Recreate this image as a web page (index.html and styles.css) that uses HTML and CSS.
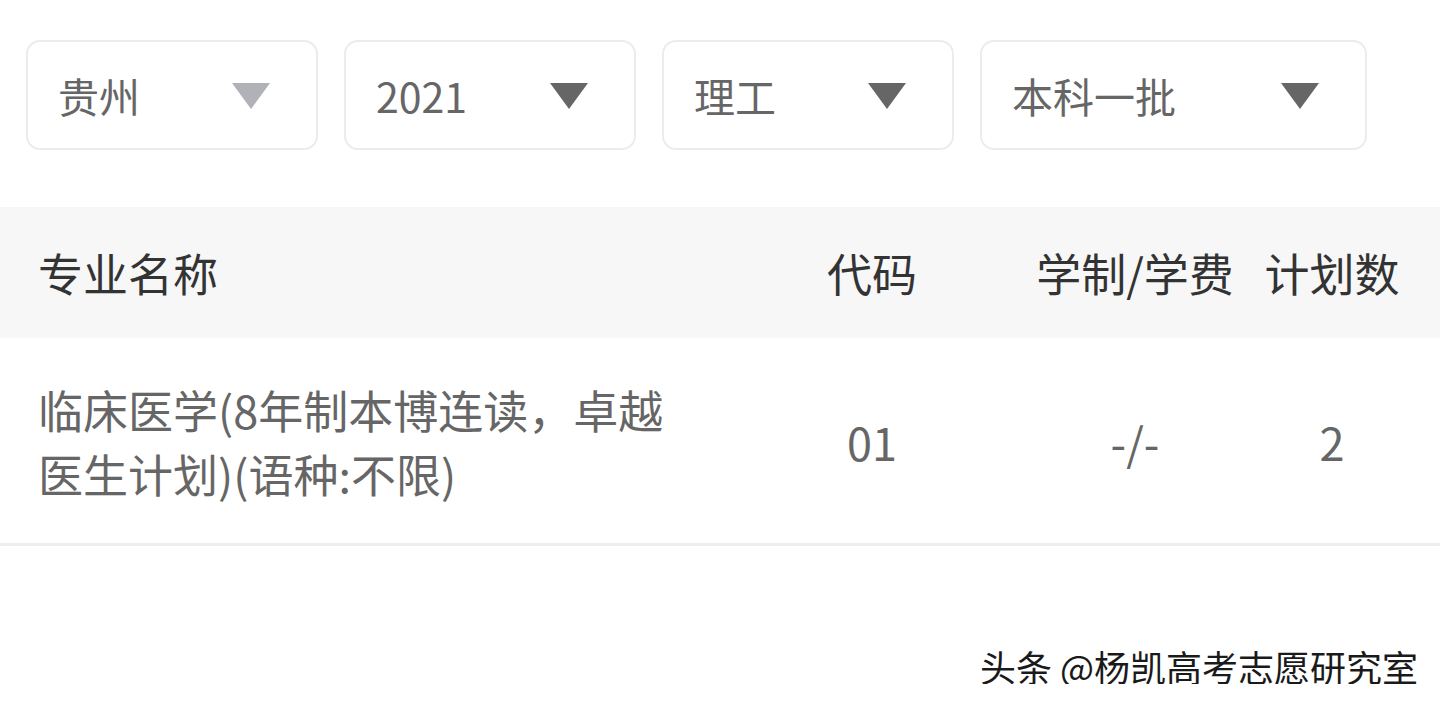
FILE: index.html
```html
<!DOCTYPE html>
<html lang="zh-CN">
<head>
<meta charset="utf-8">
<title>专业计划</title>
<link rel="stylesheet" href="styles.css">
</head>
<body>
<div class="filters">
  <div class="select w1"><span>贵州</span><i class="tri tri-light"></i></div>
  <div class="select w1"><span>2021</span><i class="tri"></i></div>
  <div class="select w1"><span>理工</span><i class="tri"></i></div>
  <div class="select w2"><span>本科一批</span><i class="tri"></i></div>
</div>
<div class="table">
  <div class="row head">
    <div class="c-name">专业名称</div>
    <div class="c-mid">代码</div>
    <div class="c-mid">学制/学费</div>
    <div class="c-mid">计划数</div>
  </div>
  <div class="row body">
    <div class="c-name">临床医学(8年制本博连读，卓越医生计划)(语种:不限)</div>
    <div class="c-mid">01</div>
    <div class="c-mid">-/-</div>
    <div class="c-mid">2</div>
  </div>
</div>
<div class="footer">
  <span class="mark">头条 @杨凯高考志愿研究室</span>
</div>
</body>
</html>
```

FILE: styles.css
```css
* { box-sizing: border-box; }
html, body {
  margin: 0;
  padding: 0;
  background: #fff;
  font-family: "Noto Sans CJK SC", "Noto Sans", sans-serif;
}
.filters {
  display: flex;
  gap: 26px;
  padding: 40px 0 0 26px;
}
.select {
  height: 110px;
  border: 2px solid #ececec;
  border-radius: 14px;
  display: flex;
  align-items: center;
  justify-content: space-between;
  padding: 0 46px 0 30px;
  font-size: 41px;
  color: #666;
}
.select span { line-height: 1; }
.w1 { width: 292px; }
.w2 { width: 387px; }
.tri {
  display: block;
  width: 0;
  height: 0;
  border-left: 19px solid transparent;
  border-right: 19px solid transparent;
  border-top: 26px solid #666;
  margin-top: 2px;
}
.tri-light { border-top-color: #b1b1b8; }
.table { margin-top: 57px; }
.row {
  display: grid;
  grid-template-columns: 676px 316px 210px 184px;
  padding-left: 38px;
  align-items: center;
}
.head {
  height: 131px;
  background: #f7f7f7;
  font-size: 45px;
  color: #333;
}
.body {
  height: 208px;
  border-bottom: 3px solid #eeeeee;
  font-size: 45px;
  color: #666;
  padding-top: 2px;
}
.body .c-name {
  line-height: 64px;
  padding-right: 24px;
}
.c-mid { text-align: center; white-space: nowrap; }
.footer {
  display: flex;
  justify-content: flex-end;
  padding: 102px 22px 0 0;
}
.mark {
  font-size: 36px;
  line-height: 1;
  color: #1a1a1a;
  text-shadow: 2px 2px 0 #fff, -1px -1px 0 #fff;
  font-weight: 400;
}
```
